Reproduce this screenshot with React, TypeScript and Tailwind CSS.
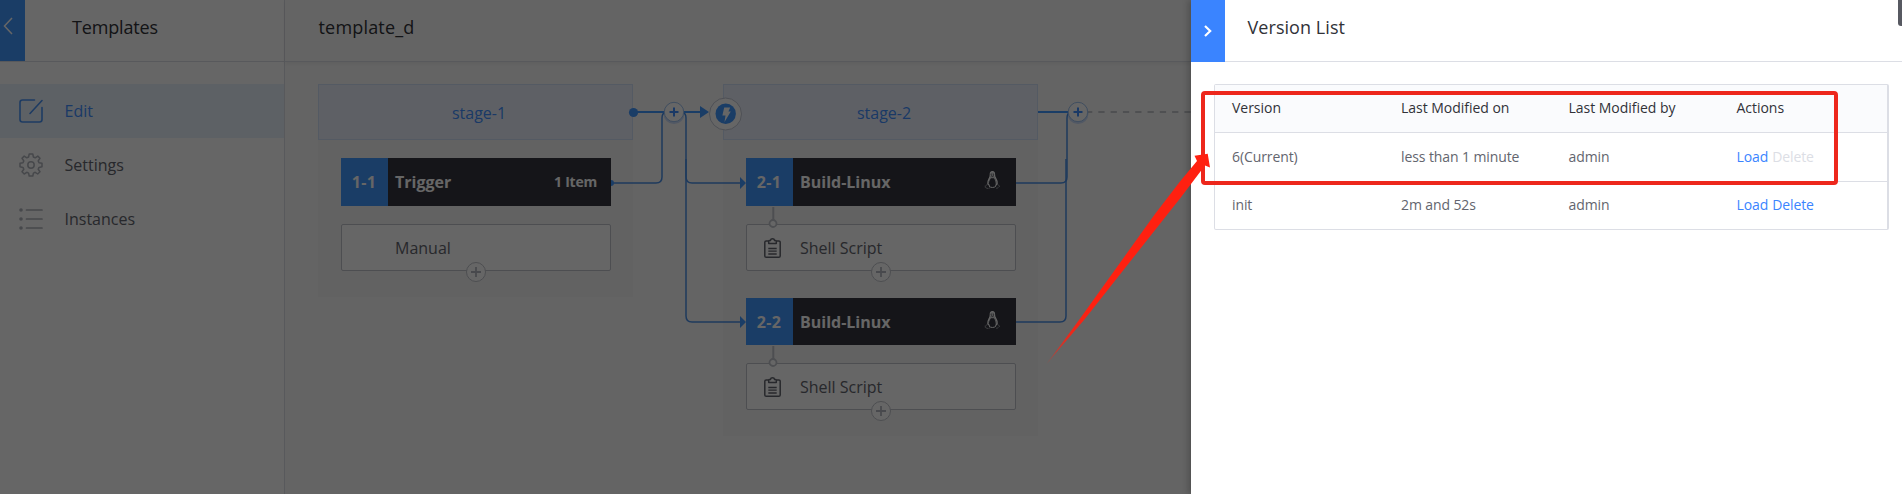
import React from "react";

const Penguin = () => (
  <svg width="17" height="18" viewBox="0 0 17 18" fill="none" stroke="#fff" strokeLinecap="round">
    <path
      d="M8.4.7C6.900.7 6.200 1.700 6.300 3.200c.1 1.800-.2 2.600-1 4.200-.9 1.700-1.700 3.400-1.500 5.200l1.500 1.800M8.400.7c1.500 0 2.200 1 2.100 2.500-.1 1.800.2 2.600 1.200 4.200 1 1.600 1.700 3.300 1.500 5.200l-1.400 1.900"
      strokeWidth="1.200"
    />
    <path d="M6.500 2.500C6.800 1.300 7.500.8 8.400.8s1.700.6 1.900 1.700l.1 3.300 1.500 3.200 1 3.600-1.100 1.600C11.800 11 11 8.600 9.900 7.200H7C5.700 8.600 5 10.500 4.900 12.700l-.8-.6 1.200-4 1.200-2.600z" fill="#fff" fillOpacity=".8" stroke="none" />
    <path d="M6.900 3.200h.5M9.300 3.200h.5M7.400 4.800l1 .6 1.200-.6" stroke="#353640" strokeWidth=".8" />
    <path d="M5.300 15.500c1.600 1.400 4.800 1.400 6.300 0" strokeWidth="1" />
    <path
      d="M3.400 13.600l-2.200 1.200.2 1.900 3 1 1.300-.9M13.600 13.600l2.300 1.500-2.800 2.200-1.600-.3"
      strokeWidth=".8"
      strokeOpacity=".6"
      strokeDasharray="1.500 1.200"
    />
  </svg>
);

const Clipboard = () => (
  <svg width="17" height="20" viewBox="0 0 17 20" fill="none" stroke="#63656e" strokeWidth="1.500" strokeLinejoin="round">
    <path d="M4.300 3H2.200C1.300 3 .8 3.500.8 4.300v13.600c0 .8.500 1.300 1.400 1.300h12.600c.9 0 1.400-.5 1.400-1.300V4.300c0-.8-.5-1.300-1.400-1.300h-2.100" />
    <path d="M4.700 5.500V3.200c0-.5.300-.7.800-.7h.9c.2-1 .9-1.700 2.100-1.700s1.900.7 2.100 1.700h.9c.5 0 .8.200.8.7v2.300z" />
    <path d="M4.300 10.500h8.400M4.300 13.200h8.400M4.300 16h8.400" strokeWidth="1.300" />
  </svg>
);

const EditIcon = () => (
  <svg width="24" height="24" viewBox="0 0 24 24" fill="none" stroke="#4a94f5" strokeWidth="1.600" strokeLinecap="round">
    <path d="M15.500 1H3.500C2 1 1 2 1 3.500v17C1 22 2 23 3.500 23h17c1.500 0 2.500-1 2.500-2.500V8.500" />
    <path d="M11 14.500L23 1.500" />
  </svg>
);

const GearIcon = () => (
  <svg width="24" height="24" viewBox="0 0 24 24" fill="none" stroke="#b0b3bb" strokeWidth="1.500" strokeLinejoin="round">
    <circle cx="12" cy="12" r="3.200" />
    <path d="M10.200 1h3.600l.6 3 1.800.8L18.800 3.100 21 5.300l-1.800 2.600.8 1.800 3 .5v3.600l-3 .6-.8 1.800 1.800 2.600-2.300 2.200-2.500-1.700-1.800.8-.6 2.900h-3.600l-.6-2.900-1.800-.8L5.200 21 3 18.800l1.800-2.600-.8-1.800-3-.6v-3.600l3-.5.8-1.800L3 5.300l2.200-2.200 2.600 1.700 1.800-.8z" />
  </svg>
);

const ListIcon = () => (
  <svg width="24" height="24" viewBox="0 0 24 24" stroke="#b0b3bb" strokeLinecap="round">
    <path d="M7.500 3h15.500M7.500 12h15.500M7.500 21h15.500" strokeWidth="1.700" />
    <path d="M2 3h.01M2 12h.01M2 21h.01" strokeWidth="3.600" />
  </svg>
);

const menu = [
  { label: "Edit", icon: <EditIcon />, active: true },
  { label: "Settings", icon: <GearIcon />, active: false },
  { label: "Instances", icon: <ListIcon />, active: false },
];

function Sidebar() {
  return (
    <aside className="flex h-full w-[285px] shrink-0 flex-col border-r border-[#dcdee5] bg-white">
      <div className="flex h-[62px] shrink-0 border-b border-[#dcdee5]">
        <div className="flex w-[25px] justify-start bg-[#4398ff] pt-[17px] pl-[3px]">
          <svg width="10" height="18" viewBox="0 0 10 18" fill="none" stroke="#fff" strokeWidth="1.500">
            <path d="M9 1L1.500 9L9 17" />
          </svg>
        </div>
        <h1 className="pl-[47px] text-[18px] leading-[54px] tracking-[-0.16px] text-[#313238]">Templates</h1>
      </div>
      <nav className="flex flex-col pt-[22px]">
        {menu.map((m) => (
          <div
            key={m.label}
            className={
              m.active
                ? "flex h-[54px] items-center bg-[#e9f2fd] pl-[19px] text-[#4390ff]"
                : "flex h-[54px] items-center pl-[19px] text-[#63656e]"
            }
          >
            {m.icon}
            <span className="pb-px pl-[21.500px] text-[16px]">{m.label}</span>
          </div>
        ))}
      </nav>
    </aside>
  );
}

function AddCircle({ className }: { className: string }) {
  return (
    <span className={"absolute flex size-5 items-center justify-center rounded-full border border-[#c0c3ca] bg-white " + className}>
      <svg width="10" height="10" viewBox="0 0 10 10" stroke="#b4b7c0" strokeWidth="1.800">
        <path d="M5 0v10M0 5h10" />
      </svg>
    </span>
  );
}

type JobProps = { id: string; name: string; step: string; extra?: string; short?: boolean };

function Job({ id, name, step, extra, short }: JobProps) {
  return (
    <div className="flex flex-col">
      <div className={(short ? "h-[47px]" : "h-[48px]") + " flex items-center bg-[#353640] font-bold text-white"}>
        <span className="flex h-full w-[47px] items-center justify-center bg-[#4398ff] text-[16px] tracking-[0.400px]">{id}</span>
        <span className="grow pl-[7.500px] text-[16px]">{name}</span>
        {extra ? (
          <span className="pr-[13.500px] pb-px text-[14px] tracking-[-0.230px]">{extra}</span>
        ) : (
          <span className="mt-[-4px] pr-[15px]">
            <Penguin />
          </span>
        )}
      </div>
      <div className="relative mt-[18px] flex h-[47px] items-center rounded-[2px] border border-[#c0c3ca] bg-white text-[16px] text-[#63656e]">
        {!extra && (
          <>
            <svg className="absolute top-[-19px] left-[21px]" width="10" height="24" viewBox="0 0 10 24" stroke="#c0c3ca" fill="none">
              <path d="M5.300 1v13" strokeWidth="2" />
              <circle cx="5" cy="17.500" r="3.500" strokeWidth="1.800" fill="#fff" />
            </svg>
            <span className="ml-[17.500px] flex">
              <Clipboard />
            </span>
          </>
        )}
        <span className={extra ? "pl-[53.500px]" : "pl-[19px]"}>{step}</span>
        <AddCircle className="bottom-[-12px] left-[124px]" />
      </div>
    </div>
  );
}

function Stage({ title, children }: { title: string; children: React.ReactNode }) {
  return (
    <section className="flex w-[315px] flex-col bg-[#f5f5f6] pb-[26px]">
      <div className="flex h-[56px] items-center justify-center border border-[#d3e1f7] bg-[#ecf0fc] pt-[2px] pl-[7px] text-[16px] text-[#4390ff]">
        {title}
      </div>
      <div className="flex flex-col gap-[27px] px-[22.500px] pt-[18px]">{children}</div>
    </section>
  );
}

function BlueAdd({ x }: { x: number }) {
  return (
    <g stroke="none">
      <circle cx={x} cy="113.500" r="10.500" fill="#3a84ff" opacity=".25" />
      <circle cx={x} cy="112" r="9.700" fill="#fff" stroke="#9fc2ee" strokeWidth="1" />
      <path d={`M${x} 107.500v9M${x - 4.5} 112h9`} stroke="#4390ff" strokeWidth="2" />
    </g>
  );
}

function Connectors() {
  return (
    <svg className="absolute top-0 left-0" width="1191" height="494" viewBox="0 0 1191 494" fill="none" stroke="#4a90e8">
      <g strokeWidth="1.500">
        <path d="M611 183H656q6 0 6-6V118q0-5 4-6" />
        <path d="M682 112q4 1 4 6V177q0 6 6 6H742" />
        <path d="M686 159V316q0 6 6 6H742" />
        <path d="M1016 183H1061q6 0 6-6V118q0-5 4-6" />
        <path d="M1016 322H1060q6 0 6-6V159" />
      </g>
      <g stroke="#4398ff" strokeWidth="2">
        <path d="M634 112H664M684 112H702M1038 112H1068" />
      </g>
      <g fill="#4398ff" stroke="none">
        <circle cx="633.500" cy="112.500" r="4.600" />
        <path d="M611 180a3 3 0 0 1 0 6zM700 106l9 6-9 6zM740 177l6 6-6 6zM740 316l6 6-6 6z" />
      </g>
      <path d="M1088 112H1191" stroke="#b4b7c0" strokeWidth="1.700" strokeDasharray="6.300 6" strokeDashoffset="2" />
      <BlueAdd x={674} />
      <BlueAdd x={1078} />
      <circle cx="725.500" cy="114" r="16" fill="#fff" stroke="#c3c8d6" />
      <circle cx="725.700" cy="113.700" r="10.200" fill="#4398ff" stroke="none" />
      <path d="M724.200 107.500h6l-1.800 4h2.400l-6.300 10.500 1-6.500h-3.100z" fill="#fff" stroke="none" />
    </svg>
  );
}

function Canvas() {
  return (
    <main className="flex grow flex-col bg-[#fafafa]">
      <header className="h-[62px] shrink-0 border-b border-[#dcdee5] pl-[33.500px] text-[18px] leading-[54px] tracking-[0.180px] text-[#313238] shadow-[0_2px_4px_rgba(0,0,0,0.06)]">
        template_d
      </header>
      <div className="flex items-start gap-[90px] pt-[22px] pl-[33px]">
        <Stage title="stage-1">
          <Job id="1-1" name="Trigger" step="Manual" extra="1 Item" />
        </Stage>
        <Stage title="stage-2">
          <Job id="2-1" name="Build-Linux" step="Shell Script" />
          <Job id="2-2" name="Build-Linux" step="Shell Script" short />
        </Stage>
      </div>
    </main>
  );
}

const versions = [
  { name: "6(Current)", on: "less than 1 minute", by: "admin", removable: false },
  { name: "init", on: "2m and 52s", by: "admin", removable: true },
];

const cols = "grid grid-cols-[169px_167.500px_168px_1fr] items-center pb-[2px] pl-[17px]";

function Drawer() {
  return (
    <aside className="absolute top-0 right-0 flex h-full w-[711px] flex-col bg-white shadow-[-3px_0_6px_rgba(0,0,0,0.2)]">
      <header className="flex h-[62px] shrink-0">
        <div className="flex w-[34px] items-center justify-center bg-[#3a84ff]">
          <svg width="8" height="12" viewBox="0 0 8 12" fill="none" stroke="#fff" strokeWidth="2.200">
            <path d="M1 1l5.200 5L1 11" />
          </svg>
        </div>
        <h2 className="grow border-b border-[#dcdee5] pl-[22.500px] text-[18px] leading-[54px] tracking-[0.060px] text-[#313238]">
          Version List
        </h2>
      </header>
      <div className="mt-[22px] ml-[23px] flex w-[675px] flex-col rounded-[2px] border border-r-2 border-[#dcdee5] text-[14px] text-[#63656e]">
        <div className={cols + " h-[48px] border-b border-[#dcdee5] bg-[#fafbfd] tracking-[-0.030px] text-[#313238]"}>
          <span>Version</span>
          <span>Last Modified on</span>
          <span>Last Modified by</span>
          <span>Actions</span>
        </div>
        {versions.map((v) => (
          <div
            key={v.name}
            className={cols + (v.removable ? " h-[47px]" : " h-[49px] border-b border-[#dcdee5]") + " tracking-[-0.100px]"}
          >
            <span>{v.name}</span>
            <span>{v.on}</span>
            <span>{v.by}</span>
            <span className="flex gap-[4px] text-[#3a84ff]">
              <a>Load</a>
              <a className={v.removable ? "" : "text-[#dcdee5]"}>Delete</a>
            </span>
          </div>
        ))}
      </div>
      <span className="absolute top-0 right-0 h-[26px] w-[4px] rounded-bl-[3px] bg-[#575961]" />
    </aside>
  );
}

function Callout() {
  return (
    <svg className="absolute top-0 left-0" width="1902" height="494" viewBox="0 0 1902 494" fill="none">
      <defs>
        <linearGradient id="tail" gradientUnits="userSpaceOnUse" x1="1046" y1="364" x2="1090" y2="308">
          <stop offset="0" stopColor="#ff2010" stopOpacity="0.300" />
          <stop offset=".5" stopColor="#ff2010" stopOpacity=".85" />
          <stop offset="1" stopColor="#ff2010" />
        </linearGradient>
      </defs>
      <rect x="1203" y="93" width="633" height="90" rx="2" stroke="#ed271c" strokeWidth="4" />
      <path
        d="M1046.500 364L1079 320L1155 214L1180 181.500L1197 161L1194.500 155.700L1207.700 153.700L1210 167.500L1205 165.500L1180 198.500L1168.500 213L1084 320Z"
        fill="url(#tail)"
      />
    </svg>
  );
}

export default function App() {
  return (
    <div className="relative flex h-[494px] w-[1902px] overflow-hidden font-['Open_Sans','Noto_Sans',sans-serif]">
      <Sidebar />
      <Canvas />
      <Connectors />
      <div className="absolute inset-0 bg-black/60" />
      <Drawer />
      <Callout />
    </div>
  );
}
